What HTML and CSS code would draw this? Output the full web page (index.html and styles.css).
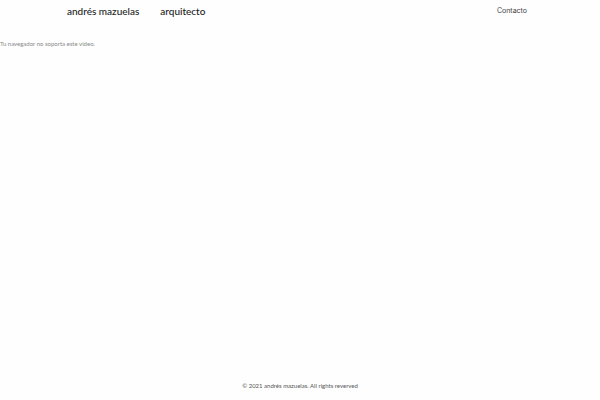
FILE: index.html
```html
<!DOCTYPE html>
<html lang="es">

<head>
    <meta charset="utf-8">
    <title>andrés mazuelas arquitecto</title>
    <meta name="viewport" content="width=device-width, initial-scale=1">
    <link rel="stylesheet" href="styles.css">
</head>

<body>
    <header class="header">
        <a href="#" class="logo"><span>andrés mazuelas</span><span>arquitecto</span></a>
        <nav>
            <a href="#contacto" class="nav-link">Contacto</a>
        </nav>
    </header>

    <main class="content">
        <p class="video-text">Tu navegador no soporta este video.</p>
    </main>

    <footer class="footer">
        <p>© 2021 andrés mazuelas. All rights reverved</p>
    </footer>
</body>

</html>
```

FILE: styles.css
```css
body {
    margin: 0;
    min-height: 100vh;
    display: flex;
    flex-direction: column;
    font-family: Lato, "Liberation Sans", sans-serif;
    background-color: #fefefe;
    color: #777;
}

p {
    margin: 0;
}

a {
    text-decoration: none;
}

.header {
    display: flex;
    justify-content: space-between;
    align-items: center;
    height: 21px;
    padding: 0 73px 0 67px;
}

.logo {
    display: flex;
    gap: 21px;
    font-size: 10px;
    font-weight: 500;
    color: #222;
}

.nav-link {
    display: block;
    font-family: Inter, "Liberation Sans", sans-serif;
    font-size: 7px;
    color: #444;
}

/* El texto queda bajo la cabecera, el resto del alto es libre */
.content {
    flex: 1;
    padding-top: 19px;
}

.video-text {
    font-size: 6px;
    line-height: 8px;
    color: #888;
}

.footer {
    padding-bottom: 10px;
    text-align: center;
    font-size: 6px;
    line-height: 8px;
    color: #555;
}
```
